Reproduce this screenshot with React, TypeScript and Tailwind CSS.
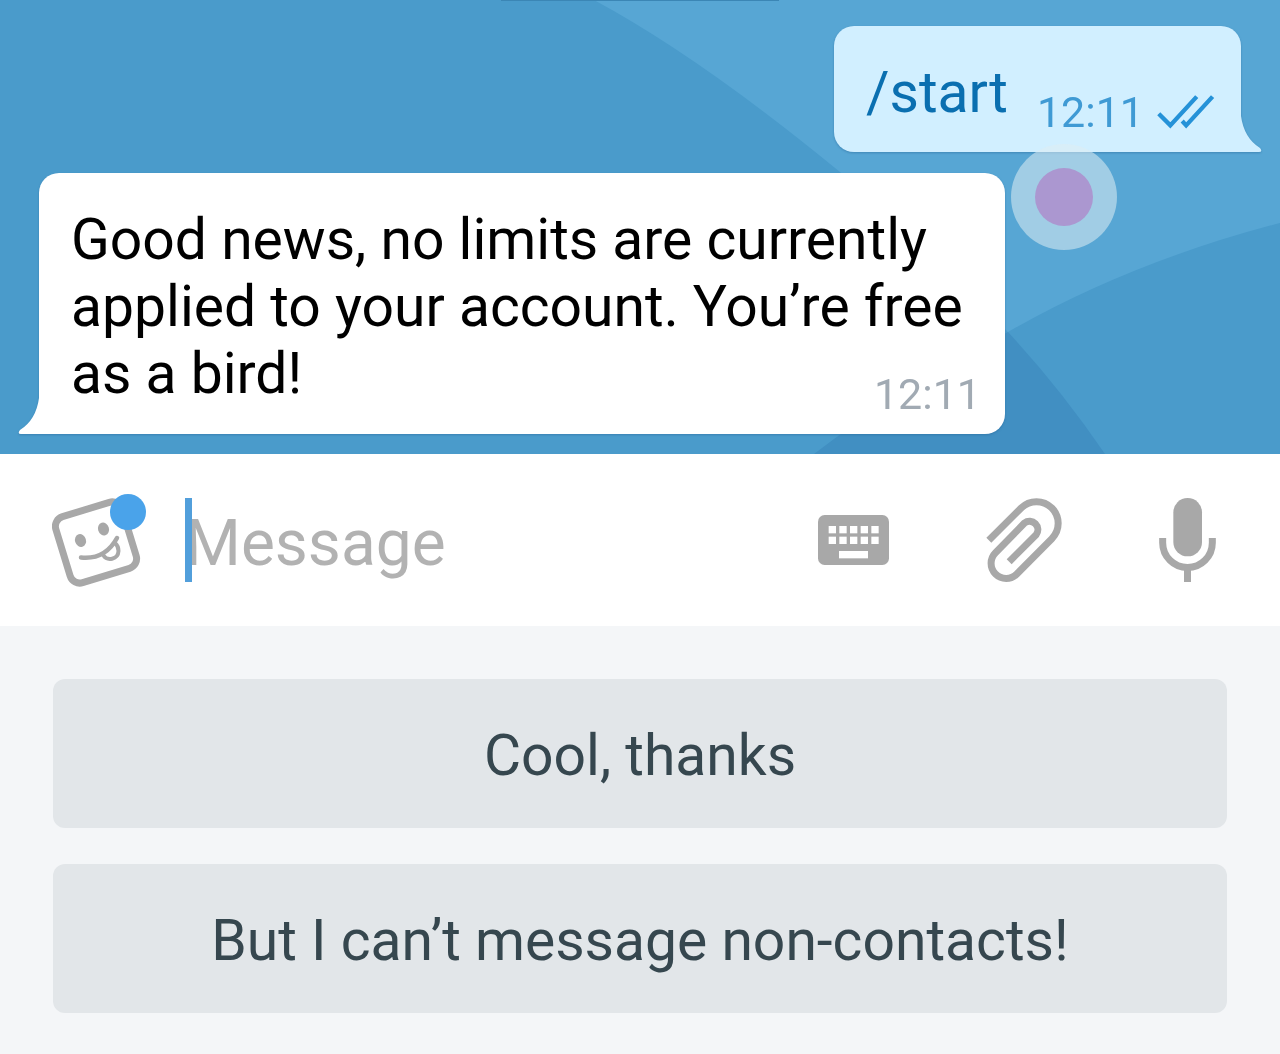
import type { ReactNode } from "react";

function ChatBackground() {
  return (
    <svg
      aria-hidden="true"
      viewBox="0 0 1280 454"
      preserveAspectRatio="none"
      className="absolute inset-0 h-full w-full"
    >
      <rect width="1280" height="454" fill="#4a9bcb" />
      <path d="M594 0Q700 57 840 172L1008 332Q1130 262 1280 223V0Z" fill="#57a6d4" />
      <path d="M814 454Q900 388 1008 332Q1060 388 1105 454Z" fill="#418fc2" />
    </svg>
  );
}

function DoubleCheck() {
  return (
    <svg
      viewBox="1008 282 176 106"
      className="mb-[5px] h-[35px] w-[59px]"
      fill="none"
      stroke="#2592d8"
      strokeWidth="13"
    >
      <path d="M1015 342L1050 377L1130 290" />
      <path d="M1086 364L1098 377L1178 290" />
    </svg>
  );
}

function StickerIcon() {
  return (
    <svg viewBox="52 492 94 96" className="h-24 w-[94px]">
      <g fill="none" stroke="#a8a8a8" strokeLinecap="round">
        <rect x="61.5" y="508" width="69" height="69" rx="10" strokeWidth="7" transform="rotate(-17 96 542.5)" />
        <path d="M81 557.500Q105 560 117 538" strokeWidth="4.5" />
        <path d="M103.500 555.500C107 561 118 560 118.500 551Q118.500 546 115 543" strokeWidth="4" />
      </g>
      <ellipse cx="80.500" cy="540.500" rx="5.500" ry="6.500" fill="#a8a8a8" transform="rotate(-17 80.5 540.5)" />
      <ellipse cx="103.500" cy="529" rx="5.500" ry="6.500" fill="#a8a8a8" transform="rotate(-17 103.5 529)" />
      <circle cx="128" cy="512" r="18" fill="#4aa3ea" />
    </svg>
  );
}

const KEY_COLUMNS = [86, 118, 150, 182, 214];
const KEY_ROWS = [138, 170];

function KeyboardIcon() {
  return (
    <svg viewBox="54 105 213 150" className="h-[50px] w-[71px]">
      <rect x="54" y="105" width="213" height="150" rx="20" fill="#a8a8a8" />
      {KEY_ROWS.map((y) =>
        KEY_COLUMNS.map((x) => <rect key={`${x}-${y}`} x={x} y={y} width="22" height="22" fill="#fff" />),
      )}
      <rect x="117" y="213" width="87" height="22" fill="#fff" />
    </svg>
  );
}

function PaperclipIcon() {
  return (
    <svg viewBox="557 56 227 252" className="h-[84px] w-[76px]" fill="none" stroke="#a8a8a8" strokeWidth="21">
      <path d="M565 183L662 86A65 65 0 0 1 754 178L649 284A45 45 0 0 1 585 220L672 131A25 25 0 0 1 707 166L626 247" />
    </svg>
  );
}

function MicIcon() {
  return (
    <svg viewBox="237 57 171 252" className="h-[84px] w-[57px]">
      <rect x="280" y="57" width="86" height="175" rx="43" fill="#a8a8a8" />
      <path
        d="M248 177V191A74.500 74.500 0 0 0 397 191V177M322.500 266V309"
        fill="none"
        stroke="#a8a8a8"
        strokeWidth="21"
      />
    </svg>
  );
}

function OutgoingMessage() {
  return (
    <div className="relative mr-[39px] flex items-end self-end rounded-[20px] rounded-br-none bg-[#d1efff] pt-[33px] pr-[26px] pb-[18px] pl-8 drop-shadow-[0_1px_1px_rgba(30,90,140,0.4)]">
      <a href="#start" className="mr-[29px] pb-2 text-[57px] leading-[67px] text-[#0a6fb0]">
        /start
      </a>
      <time className="mr-3 text-[43px] leading-[43px] text-[#3f9ad4]">12:11</time>
      <DoubleCheck />
      <svg aria-hidden="true" viewBox="0 0 21 36" className="absolute bottom-0 left-full h-9 w-[21px]">
        <path d="M-1 0H0Q3 22 19 32Q22 36 18 36H-1Z" fill="#d1efff" />
      </svg>
    </div>
  );
}

function IncomingMessage({ children }: { children: ReactNode }) {
  return (
    <div className="relative ml-[39px] max-w-[966px] self-start rounded-[20px] rounded-bl-none bg-white pt-[33px] pr-7 pb-[27px] pl-8 drop-shadow-[0_1px_1px_rgba(30,90,140,0.4)]">
      <svg aria-hidden="true" viewBox="0 0 21 36" className="absolute right-full bottom-0 h-9 w-[21px]">
        <path d="M22 0H21Q18 22 2 32Q-1 36 3 36H22Z" fill="#fff" />
      </svg>
      <p className="text-[57px] leading-[67px] text-black">{children}</p>
      <time className="absolute right-6 bottom-[18px] text-[43px] leading-[43px] text-[#a1aab3]">12:11</time>
    </div>
  );
}

function TouchPoint() {
  return (
    <div className="absolute top-[144px] right-[163px] flex size-[106px] items-center justify-center rounded-full bg-[#dfedf2]/55">
      <div className="size-[58px] rounded-full bg-[#ab97d0]" />
    </div>
  );
}

const REPLIES = ["Cool, thanks", "But I can’t message non-contacts!"];

export default function App() {
  return (
    <div className="flex min-h-screen flex-col bg-[#f4f6f8] font-[Roboto,sans-serif]">
      <main className="relative flex flex-col gap-[21px] overflow-hidden pt-[26px] pb-5">
        <ChatBackground />
        <div className="absolute top-0 left-1/2 h-px w-[278px] -translate-x-1/2 bg-[#3b86b5]" />
        <OutgoingMessage />
        <IncomingMessage>Good news, no limits are currently applied to your account. You’re free as a bird!</IncomingMessage>
        <TouchPoint />
      </main>

      <form className="flex h-[172px] items-center bg-white pr-16 pl-[52px]">
        <button type="button" aria-label="Stickers">
          <StickerIcon />
        </button>
        <div className="relative ml-[39px] flex min-w-0 flex-1 items-center">
          <input
            type="text"
            aria-label="Message"
            placeholder="Message"
            className="w-full min-w-0 pt-2 text-[64px] leading-[76px] text-black caret-[#529fdb] outline-none placeholder:text-[#b2b2b2]"
          />
          <span className="absolute top-0 left-0 h-[84px] w-[7px] bg-[#529fdb]" />
        </div>
        <div className="flex items-center gap-[97px]">
          <button type="button" aria-label="Bot keyboard">
            <KeyboardIcon />
          </button>
          <button type="button" aria-label="Attach file">
            <PaperclipIcon />
          </button>
          <button type="button" aria-label="Record voice message">
            <MicIcon />
          </button>
        </div>
      </form>

      <div className="flex flex-col gap-9 px-[53px] pt-[53px] pb-[41px]">
        {REPLIES.map((reply) => (
          <button
            key={reply}
            type="button"
            className="h-[149px] rounded-xl bg-[#e2e6e9] pt-1 text-[57px] leading-[67px] text-[#36474f]"
          >
            {reply}
          </button>
        ))}
      </div>
    </div>
  );
}
